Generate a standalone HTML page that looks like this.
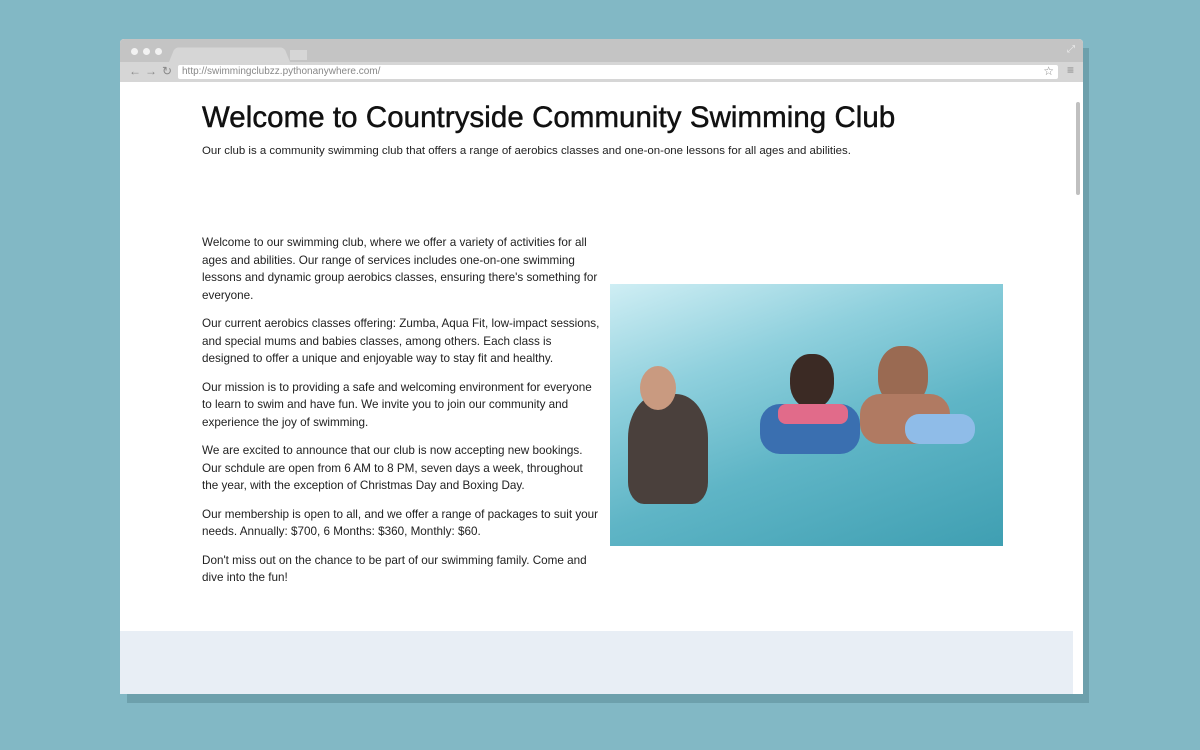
<!DOCTYPE html>
<html><head><style>
*{margin:0;padding:0;box-sizing:border-box}
body{width:1200px;height:750px;background:#82b8c5;position:relative;overflow:hidden;font-family:"Liberation Sans",sans-serif}
.shadow{position:absolute;left:127px;top:48px;width:962px;height:655px;background:#5f8f9b;opacity:.6}
.win{position:absolute;left:120px;top:39px;width:963px;height:655px;background:#fff;border-radius:4px 4px 0 0;overflow:hidden}
.top{height:23px;background:#c4c4c4;position:relative}
.dot{position:absolute;top:9px;width:7px;height:7px;border-radius:50%;background:#f2f2f2}
.tab{position:absolute;left:52px;top:8px;width:115px;height:15px;background:#d6d6d6;border-radius:4px 4px 0 0;transform:perspective(20px) rotateX(8deg)}
.tab2{position:absolute;left:170px;top:11px;width:17px;height:10px;background:#d6d6d6}
.bar{height:20px;background:#d6d6d6;position:relative}
.url{position:absolute;left:58px;top:3px;width:880px;height:14px;background:#fff;border-radius:2px;font-size:10px;color:#888;padding-left:4px;line-height:14px}
.nav{position:absolute;top:2px;font-size:12px;color:#888}
.content{position:absolute;left:0;top:43px;width:963px;height:612px;background:#fff}
h1{position:absolute;left:82px;top:19px;font-size:29.4px;font-weight:normal;color:#111;letter-spacing:.1px;-webkit-text-stroke:.5px #111;white-space:nowrap}
.sub{position:absolute;left:82px;top:63px;font-size:11.45px;color:#222;white-space:nowrap}
.txt{position:absolute;left:82px;top:152px;width:398px;font-size:11.7px;line-height:17.5px;color:#222}
.txt p{margin-bottom:11px}
.img{position:absolute;left:490px;top:202px;width:393px;height:262px;background:linear-gradient(160deg,#cfeef4 0%,#8fd0dd 30%,#5fb5c6 60%,#3f9fb2 100%);overflow:hidden}
.foot{position:absolute;left:0;top:549px;width:953px;height:63px;background:#e8eef5}
.sb{position:absolute;left:956px;top:20px;width:4px;height:93px;background:#c0c0c0;border-radius:2px}
</style></head><body>
<div class="shadow"></div>
<div class="win">
<div class="top"><div class="dot" style="left:11px"></div><div class="dot" style="left:23px"></div><div class="dot" style="left:35px"></div><div class="tab"></div><div class="tab2"></div>
<div style="position:absolute;right:8px;top:5px;color:#eee;font-size:10px">⤢</div></div>
<div class="bar"><span class="nav" style="left:9px">←</span><span class="nav" style="left:25px">→</span><span class="nav" style="left:42px">↻</span>
<div class="url">http://swimmingclubzz.pythonanywhere.com/<span style="position:absolute;right:4px;top:-1px;font-size:12px">☆</span></div>
<span class="nav" style="left:947px;top:1px">≡</span></div>
<div class="content">
<h1>Welcome to Countryside Community Swimming Club</h1>
<div class="sub">Our club is a community swimming club that offers a range of aerobics classes and one-on-one lessons for all ages and abilities.</div>
<div class="txt">
<p>Welcome to our swimming club, where we offer a variety of activities for all ages and abilities. Our range of services includes one-on-one swimming lessons and dynamic group aerobics classes, ensuring there's something for everyone.</p>
<p>Our current aerobics classes offering: Zumba, Aqua Fit, low-impact sessions, and special mums and babies classes, among others. Each class is designed to offer a unique and enjoyable way to stay fit and healthy.</p>
<p>Our mission is to providing a safe and welcoming environment for everyone to learn to swim and have fun. We invite you to join our community and experience the joy of swimming.</p>
<p>We are excited to announce that our club is now accepting new bookings. Our schdule are open from 6 AM to 8 PM, seven days a week, throughout the year, with the exception of Christmas Day and Boxing Day.</p>
<p>Our membership is open to all, and we offer a range of packages to suit your needs. Annually: $700, 6 Months: $360, Monthly: $60.</p>
<p>Don't miss out on the chance to be part of our swimming family. Come and dive into the fun!</p>
</div>
<div class="img">
<div style="position:absolute;left:18px;top:110px;width:80px;height:110px;background:#4a403c;border-radius:40% 40% 20% 20%"></div>
<div style="position:absolute;left:30px;top:82px;width:36px;height:44px;background:#c99a80;border-radius:50%"></div>
<div style="position:absolute;left:180px;top:70px;width:44px;height:54px;background:#3b2a24;border-radius:45%"></div>
<div style="position:absolute;left:150px;top:120px;width:100px;height:50px;background:#3a6fb0;border-radius:20px"></div>
<div style="position:absolute;left:168px;top:120px;width:70px;height:20px;background:#e16b8a;border-radius:8px"></div>
<div style="position:absolute;left:268px;top:62px;width:50px;height:60px;background:#9a6a52;border-radius:45%"></div>
<div style="position:absolute;left:250px;top:110px;width:90px;height:50px;background:#b07a62;border-radius:20px"></div>
<div style="position:absolute;left:295px;top:130px;width:70px;height:30px;background:#8fbce8;border-radius:14px"></div>
</div>
<div class="foot"></div>
<div class="sb"></div>
</div>
</div>
</body></html>
